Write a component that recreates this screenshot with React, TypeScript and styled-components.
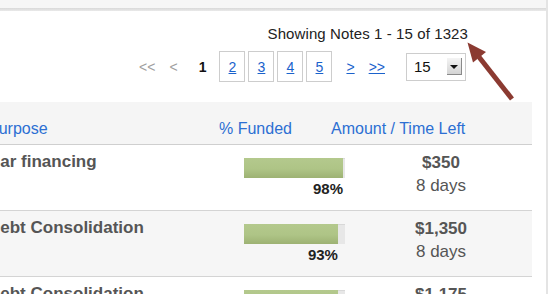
import styled, { createGlobalStyle } from 'styled-components'

type Note = {
  purpose: string;
  funded: number;
  amount: string;
  timeLeft: string;
}

const notes: Note[] = [
  { purpose: 'Car financing', funded: 98, amount: '$350', timeLeft: '8 days' },
  { purpose: 'Debt Consolidation', funded: 93, amount: '$1,350', timeLeft: '8 days' },
  { purpose: 'Debt Consolidation', funded: 93, amount: '$1,175', timeLeft: '8 days' },
]

const pages = [2, 3, 4, 5]

export default function App() {
  return (
    <>
      <GlobalStyle />
      <Page>
        <TopBar />
        <Summary>Showing Notes 1 - 15 of 1323</Summary>
        <Pager>
          <Dim>&lt;&lt;</Dim>
          <Dim gap={14}>&lt;</Dim>
          <Current>1</Current>
          <PageBoxes>
            {pages.map((p) => (
              <PageBox key={p}>
                <PageLink href="#">{p}</PageLink>
              </PageBox>
            ))}
          </PageBoxes>
          <NavLink href="#" gap={14}>&gt;</NavLink>
          <NavLink href="#" gap={14}>&gt;&gt;</NavLink>
          <PerPage>
            15
            <DropButton />
          </PerPage>
        </Pager>

        <Table>
          <HeaderRow>
            <HeadCell>Purpose</HeadCell>
            <HeadCell>% Funded</HeadCell>
            <HeadCell>Amount / Time Left</HeadCell>
          </HeaderRow>
          {notes.map((n, i) => (
            <Row key={i} striped={i % 2 === 1}>
              <Purpose>{n.purpose}</Purpose>
              <Funded>
                <Bar>
                  <Fill style={{ width: `${n.funded}%` }} />
                </Bar>
                <PercentTrack>
                  <Percent style={{ width: `${n.funded}%` }}>{n.funded}%</Percent>
                </PercentTrack>
              </Funded>
              <AmountCell>
                <Amount>
                  <strong>{n.amount}</strong>
                  <span>{n.timeLeft}</span>
                </Amount>
              </AmountCell>
            </Row>
          ))}
        </Table>

        {/* annotation arrow pointing at the note count */}
        <Arrow width="60" height="70" viewBox="0 0 60 70">
          <path d="M19 19 L52 61" stroke="#8b3a31" strokeWidth="5" />
          <path d="M7.5 4.5 L26 14 L13 24.5 Z" fill="#8b3a31" />
        </Arrow>
      </Page>
    </>
  )
}

// Styles
const GlobalStyle = createGlobalStyle`
  html, body {
    margin: 0;
    padding: 0;
    background: #fff;
    overflow: hidden;
  }
  body {
    font-family: "Liberation Sans", Arial, Helvetica, sans-serif;
  }
`

const Page = styled.div`
  position: relative;
  width: 546px;
  height: 294px;
  overflow: hidden;
  background: #fff;
  border-right: 2px solid #e4e4e4;
`

const TopBar = styled.div`
  height: 11px;
  background: linear-gradient(to bottom, #f6f6f6 0, #f6f6f6 8px, #d9d9d9 8px, #e9e9e9 11px);
`

const Summary = styled.div`
  margin-top: 14px;
  padding-right: 78px;
  text-align: right;
  font-size: 15px;
  line-height: 18px;
  letter-spacing: 0.1px;
  color: #222;
`

const Pager = styled.div`
  display: flex;
  justify-content: flex-end;
  align-items: center;
  height: 31px;
  margin-top: 8px;
  padding-right: 80px;
  font-size: 14px;
`

const Dim = styled.span<{ gap?: number }>`
  margin-left: ${(p) => p.gap || 0}px;
  color: #a0a0a0;
`

const Current = styled.span`
  margin-left: 21px;
  font-weight: bold;
  color: #111;
`

const PageBoxes = styled.div`
  display: flex;
  gap: 3px;
  margin-left: 13px;
`

const PageBox = styled.div`
  display: flex;
  align-items: center;
  justify-content: center;
  box-sizing: border-box;
  width: 26px;
  height: 31px;
  border: 1px solid #cdcdcd;
`

const PageLink = styled.a`
  color: #1a62cc;
  text-decoration: underline;
`

const NavLink = styled.a<{ gap?: number }>`
  margin-left: ${(p) => p.gap || 0}px;
  color: #1a62cc;
  text-decoration: underline;
`

const PerPage = styled.div`
  position: relative;
  display: flex;
  align-items: center;
  box-sizing: border-box;
  width: 60px;
  height: 28px;
  margin-left: 21px;
  padding-left: 7px;
  border: 1px solid #cdcdcd;
  font-size: 15px;
  color: #111;
`

const DropButton = styled.span`
  position: absolute;
  right: 3px;
  top: 4px;
  width: 15px;
  height: 17px;
  box-sizing: border-box;
  background: linear-gradient(to bottom, #f4f4f4, #d4d4d4);
  border-right: 1px solid #8a8a8a;
  border-bottom: 1px solid #8a8a8a;

  &::after {
    content: '';
    position: absolute;
    left: 3px;
    top: 7px;
    border-left: 4px solid transparent;
    border-right: 4px solid transparent;
    border-top: 4px solid #111;
  }
`

const Table = styled.div`
  margin: 20px 14px 0 -28px;
`

const grid = `
  display: grid;
  grid-template-columns: 231px 112px 140px 1fr;
  padding-left: 16px;
`

const HeaderRow = styled.div`
  ${grid}
  height: 43px;
  padding-top: 18px;
  box-sizing: border-box;
  background: #f5f5f5;
  border-bottom: 1px solid #cfcfcf;
`

const HeadCell = styled.div`
  font-size: 16px;
  line-height: 18px;
  color: #2c6fd3;
  white-space: nowrap;
`

const Row = styled.div<{ striped?: boolean }>`
  ${grid}
  height: 65px;
  background: ${(p) => (p.striped ? '#f6f6f6' : '#fff')};
  border-bottom: 1px solid #d4d4d4;
`

const Purpose = styled.div`
  padding-top: 7px;
  font-size: 17px;
  line-height: 20px;
  font-weight: bold;
  color: #555;
  white-space: nowrap;
`

const Funded = styled.div`
  padding-top: 13px;
  padding-left: 25px;
`

const Bar = styled.div`
  width: 101px;
  height: 20px;
  background: #e7e7e7;
  box-shadow: inset 0 1px 0 #d8d8d8;
`

const Fill = styled.div`
  height: 100%;
  background: linear-gradient(to bottom, #b4c98d 0%, #aec486 55%, #9db273 100%);
`

const PercentTrack = styled.div`
  width: 101px;
  margin-top: 2px;
`

const Percent = styled.div`
  text-align: right;
  font-size: 15px;
  line-height: 17px;
  font-weight: bold;
  color: #222;
  white-space: nowrap;
`

const AmountCell = styled.div`
  display: flex;
  justify-content: flex-end;
  padding-top: 7px;
`

const Amount = styled.div`
  display: flex;
  flex-direction: column;
  align-items: center;
  width: 60px;
  font-size: 17px;
  line-height: 22.5px;
  color: #555;
  white-space: nowrap;

  strong {
    font-weight: bold;
  }
`

const Arrow = styled.svg`
  position: absolute;
  left: 460px;
  top: 38px;
`
